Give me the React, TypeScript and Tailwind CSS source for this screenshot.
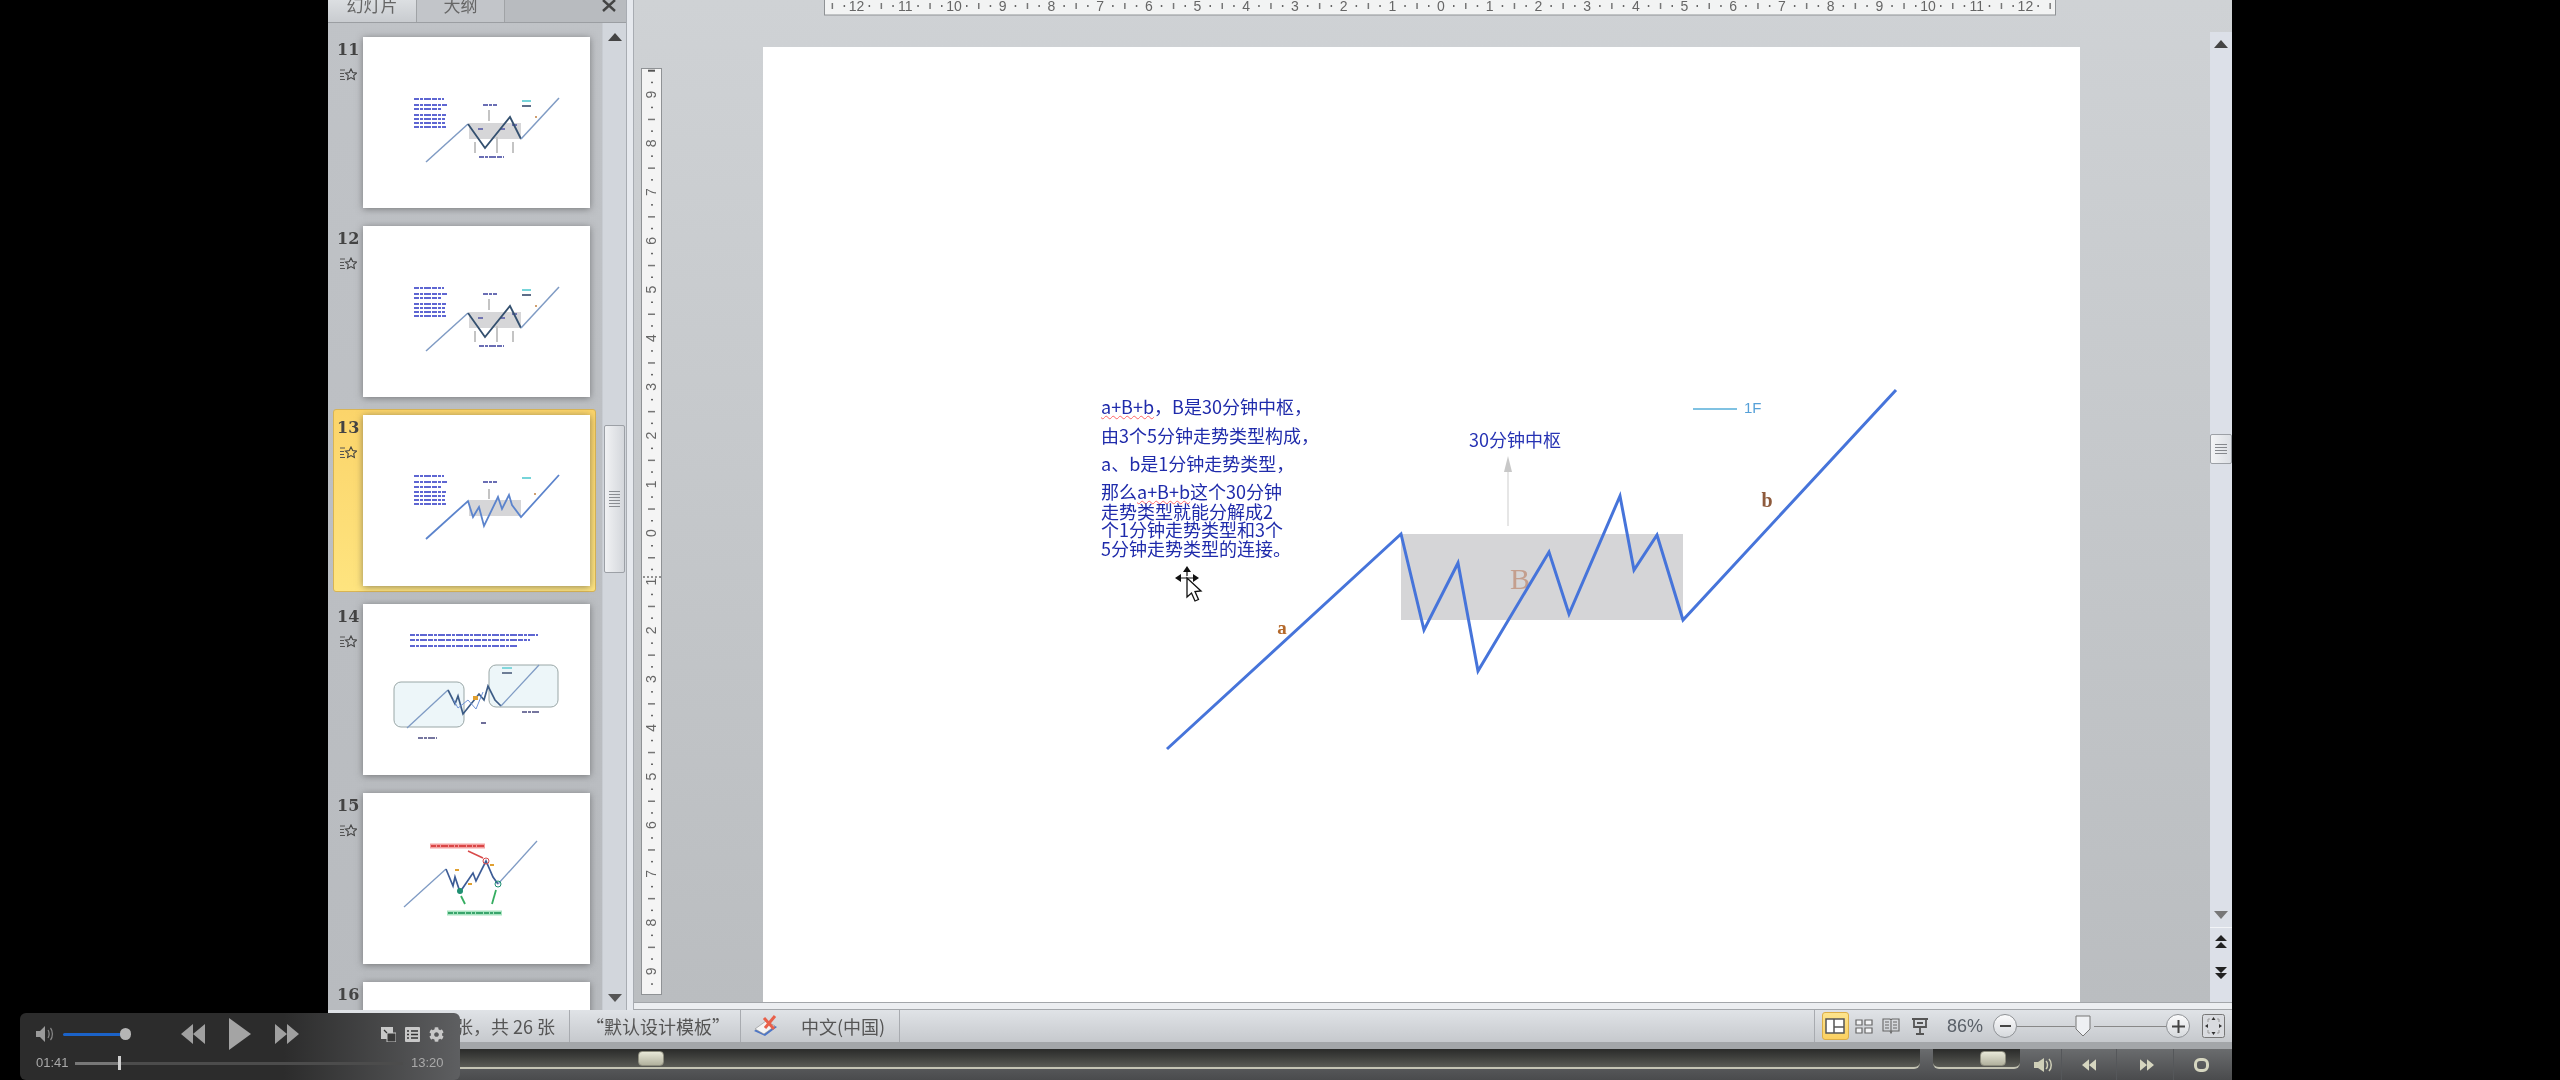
import { FaCog } from "react-icons/fa";

const BLUE = "#2733b4";

function Bars({ lines, color = "#2a35c4", h = 1.6 }: { lines: number[][]; color?: string; h?: number }) {
  return (
    <g stroke={color} strokeWidth={h} strokeDasharray="5 1 3 1 7 1">
      {lines.map(([x, y, w]) => (
        <line key={`${x}-${y}`} x1={x} y1={y} x2={x + w} y2={y} />
      ))}
    </g>
  );
}

function Down({ x, y1, y2 }: { x: number; y1: number; y2: number }) {
  return <line x1={x} y1={y1} x2={x} y2={y2} stroke="#c4c4c4" strokeWidth={2} />;
}

function Thumb11() {
  return (
    <>
      <rect x={106} y={86} width={52} height={16} fill="#d6d6d8" />
      <Bars lines={[[51, 62, 30], [51, 68, 33], [51, 72, 28], [51, 78, 32], [51, 82, 31], [51, 86, 31], [51, 90, 32]]} h={1.3} />
      <Bars lines={[[120, 68, 14], [116, 120, 25], [115, 92, 6], [137, 92, 6], [149, 88, 6]]} color="#3a3f9c" h={1.3} />
      <polyline points="63,125 105,87" fill="none" stroke="#7f9bc4" strokeWidth={1.5} />
      <polyline points="105,87 122,111 147,80 158,102" fill="none" stroke="#34506f" strokeWidth={1.8} />
      <polyline points="158,102 196,61" fill="none" stroke="#7f9bc4" strokeWidth={1.5} />
      <line x1={159} y1={64} x2={168} y2={64} stroke="#49c6cc" strokeWidth={1.5} />
      <line x1={159} y1={69} x2={168} y2={69} stroke="#283c60" strokeWidth={1.5} />
      <Down x={112} y1={105} y2={116} />
      <Down x={134} y1={100} y2={116} />
      <Down x={150} y1={105} y2={116} />
      <Down x={126} y1={73} y2={84} />
      <circle cx={173} cy={80} r={1} fill="#c08040" />
    </>
  );
}

function Thumb13() {
  return (
    <>
      <rect x={106} y={85} width={52} height={16} fill="#d6d6d8" />
      <Bars lines={[[51, 61, 30], [51, 67, 33], [51, 72, 28], [51, 77, 32], [51, 81, 31], [51, 85, 31], [51, 89, 32]]} h={1.3} />
      <Bars lines={[[120, 67, 14]]} color="#3a3f9c" h={1.3} />
      <polyline
        points="63,124 105,86 110,102 116,92 121,111 135,82 139,94 146,80 149,90 158,102 196,60"
        fill="none"
        stroke="#5c84cc"
        strokeWidth={1.8}
      />
      <line x1={159} y1={63} x2={168} y2={63} stroke="#49c6cc" strokeWidth={1.5} />
      <Down x={126} y1={74} y2={84} />
      <circle cx={172} cy={79} r={1} fill="#c08040" />
    </>
  );
}

function Thumb14() {
  return (
    <>
      <Bars lines={[[47, 31, 128], [47, 36, 120], [47, 42, 108]]} h={1.7} />
      <rect x={31} y={78} width={70} height={45} rx={7} fill="#edf6f9" stroke="#9aa7a7" strokeWidth={1} />
      <rect x={126} y={61} width={69} height={42} rx={7} fill="#edf6f9" stroke="#9aa7a7" strokeWidth={1} />
      <polyline points="44,124 85,86" fill="none" stroke="#7f9bc4" strokeWidth={1.3} />
      <polyline points="85,86 92,100 95,92 100,110 116,90 121,96 125,82 132,96 138,102" fill="none" stroke="#3d5c86" strokeWidth={1.7} />
      <polyline points="90,95 95,104 105,96 113,105 120,88" fill="none" stroke="#6f93d8" strokeWidth={1} />
      <polyline points="138,102 176,61" fill="none" stroke="#7f9bc4" strokeWidth={1.3} />
      <line x1={139} y1={64} x2={149} y2={64} stroke="#49c6cc" strokeWidth={1.3} />
      <line x1={139} y1={69} x2={149} y2={69} stroke="#283c60" strokeWidth={1.3} />
      <rect x={110} y={92} width={5} height={4} fill="#e0a030" />
      <Bars lines={[[55, 134, 19], [118, 119, 5], [159, 108, 17]]} color="#4a4a80" />
    </>
  );
}

function Thumb15() {
  return (
    <>
      <line x1={67} y1={53} x2={122} y2={53} stroke="#f4a0a0" strokeWidth={5} />
      <Bars lines={[[68, 53, 54]]} color="#d02a2a" />
      <line x1={84} y1={120} x2={139} y2={120} stroke="#a8e4c0" strokeWidth={5} />
      <Bars lines={[[85, 120, 54]]} color="#149050" />
      <polyline points="41,114 83,76" fill="none" stroke="#7f9bc4" strokeWidth={1.3} />
      <polyline points="83,76 90,93 92,84 97,99 110,80 113,88 123,68 130,84 135,91" fill="none" stroke="#3d5c96" strokeWidth={1.7} />
      <polyline points="135,91 174,48" fill="none" stroke="#7f9bc4" strokeWidth={1.3} />
      <circle cx={123} cy={68} r={3} fill="none" stroke="#d84a4a" strokeWidth={1} />
      <line x1={120} y1={65} x2={105} y2={58} stroke="#d84a4a" strokeWidth={1.5} />
      <circle cx={97} cy={98} r={3} fill="#1f8f72" />
      <circle cx={135} cy={91} r={3} fill="none" stroke="#1f8f72" strokeWidth={1} />
      <line x1={98} y1={103} x2={102} y2={111} stroke="#35ad60" strokeWidth={1.8} />
      <line x1={133} y1={97} x2={129} y2={111} stroke="#35ad60" strokeWidth={1.8} />
      <rect x={92} y={76} width={4} height={2} fill="#e0a030" />
      <rect x={127} y={71} width={4} height={2} fill="#e0a030" />
      <rect x={105} y={90} width={4} height={2} fill="#e0a030" />
    </>
  );
}

function StarMark() {
  return (
    <svg width="17" height="13" viewBox="0 0 17 13" className="mt-[7px] ml-[3px]">
      <path d="M0 2h5M0 5.500h4M0 8.500h4M0 11.500h5" stroke="#555" strokeWidth="1" />
      <path d="M11 1l1.700 3.600 3.800.5-2.800 2.600.7 3.800-3.400-1.900-3.400 1.900.7-3.800-2.800-2.600 3.800-.5z" fill="none" stroke="#444" strokeWidth="1.100" />
    </svg>
  );
}

const slides = [
  { n: 11, art: <Thumb11 /> },
  { n: 12, art: <Thumb11 /> },
  { n: 13, art: <Thumb13 />, active: true },
  { n: 14, art: <Thumb14 /> },
  { n: 15, art: <Thumb15 /> },
  { n: 16, art: null },
];

function SlidePanel() {
  return (
    <div className="flex w-[298px] shrink-0 flex-col bg-gradient-to-b from-[#c0c3c7] to-[#b8bbbf]">
      <div className="flex h-[23px] shrink-0 items-start overflow-hidden border-b border-[#9b9ea2] bg-[#b8bbbf] text-[17px] leading-[10px] text-[#666] font-['Noto_Sans_CJK_SC',sans-serif]">
        <div className="flex h-[23px] w-[88px] justify-center bg-gradient-to-b from-[#dcdfe2] to-[#c8cbcf]">幻灯片</div>
        <div className="flex h-[23px] w-[89px] justify-center border-x border-[#a0a3a6] bg-[#c2c5c9]">大纲</div>
        <svg width="14" height="12" viewBox="0 0 14 12" className="ml-[97px]">
          <path d="M1 0l12 11M13 0L1 11" stroke="#444" strokeWidth="2.400" />
        </svg>
      </div>
      <div className="flex min-h-0 flex-1">
        <div className="flex min-w-0 flex-1 flex-col gap-[6px] overflow-hidden pt-[8px] pl-[5px]">
          {slides.map((s) => (
            <div
              key={s.n}
              className={
                s.active
                  ? "flex h-[183px] w-[263px] shrink-0 rounded-[3px] border border-[#d8b455] bg-gradient-to-b from-[#fbd46a] to-[#fee47f] py-[5px]"
                  : "flex h-[183px] w-[263px] shrink-0 border border-transparent py-[5px]"
              }
            >
              <div className="w-[29px] shrink-0 pt-[2px] pl-[3px]">
                <div className="text-[16px] leading-[22px] font-bold text-[#444] font-['DejaVu_Serif',serif]">{s.n}</div>
                {s.n !== 16 && <StarMark />}
              </div>
              <div className="h-[171px] w-[227px] bg-white shadow-[0_1px_7px_rgba(60,60,60,0.55)]">
                <svg viewBox="0 0 227 171" className="h-full w-full">
                  {s.art}
                </svg>
              </div>
            </div>
          ))}
        </div>
        <div className="flex w-[24px] shrink-0 flex-col items-center border-l border-[#c8ccd2] bg-[#d2d6dc]">
          <svg width="14" height="8" viewBox="0 0 14 8" className="mt-[10px]">
            <path d="M7 0l7 8H0z" fill="#444" />
          </svg>
          <div className="mt-[384px] flex h-[148px] w-[21px] flex-col items-center justify-center gap-[2px] rounded-[2px] border border-[#9ca0a6] bg-gradient-to-r from-[#f1f2f4] to-[#d4d7dc]">
            {[0, 1, 2, 3, 4, 5].map((i) => (
              <div key={i} className="h-px w-[11px] bg-[#8a8d92]" />
            ))}
          </div>
          <svg width="14" height="8" viewBox="0 0 14 8" className="mt-[421px]">
            <path d="M7 8l7-8H0z" fill="#555" />
          </svg>
        </div>
      </div>
    </div>
  );
}

function TopRuler() {
  const marks = Array.from({ length: 25 }, (_, i) => i - 12);
  return (
    <svg width="1232" height="16" viewBox="0 0 1232 16" className="ml-[190px] block shrink-0">
      <rect x="0.500" y="-2" width="1231" height="17" fill="#f2f3f3" stroke="#8f9295" />
      {marks.map((m) => {
        const x = 617 + m * 48.7;
        return (
          <g key={m}>
            <text x={x} y={11} textAnchor="middle" fontSize="14" fill="#666" className="font-['Liberation_Sans',sans-serif]">
              {Math.abs(m)}
            </text>
            <rect x={x - 13} y={5} width={1.500} height={2} fill="#666" />
            <rect x={x + 12} y={5} width={1.500} height={2} fill="#666" />
            <rect x={x + 24} y={3} width={1.500} height={6} fill="#777" />
            {m === -12 && <rect x={x - 25} y={3} width={1.500} height={6} fill="#777" />}
          </g>
        );
      })}
    </svg>
  );
}

function LeftRuler() {
  const marks = Array.from({ length: 19 }, (_, i) => i - 9);
  return (
    <svg width="21" height="927" viewBox="0 0 21 927" className="mt-[52px] ml-[7px] block shrink-0">
      <rect x="0.500" y="0.500" width="20" height="926" fill="#f4f4f4" stroke="#8f9295" />
      {marks.map((m) => {
        const y = 465 + m * 48.7;
        return (
          <g key={m}>
            <text
              x={0}
              y={0}
              transform={`translate(15 ${y}) rotate(-90)`}
              textAnchor="middle"
              fontSize="14"
              fill="#666"
              className="font-['Liberation_Sans',sans-serif]"
            >
              {Math.abs(m)}
            </text>
            <rect x={10} y={y - 13} width={2} height={1.500} fill="#666" />
            <rect x={10} y={y + 12} width={2} height={1.500} fill="#666" />
            <rect x={7} y={y + 24} width={7} height={1.500} fill="#777" />
            {m === -9 && <rect x={7} y={y - 25} width={7} height={2} fill="#555" />}
          </g>
        );
      })}
      <line x1={2} y1={509} x2={20} y2={509} stroke="#333" strokeDasharray="2 2" />
    </svg>
  );
}

function Slide() {
  return (
    <div className="relative ml-[101px] h-[955px] w-[1317px] shrink-0 overflow-hidden bg-white">
      <svg viewBox="763 47 1317 955" className="absolute inset-0 h-full w-full">
        <rect x={1401} y={534} width={282} height={86} fill="#d5d5d7" />
        <line x1={1508} y1={526} x2={1508} y2={470} stroke="#dedede" strokeWidth={1.500} />
        <path d="M1508 456l-4 16h8z" fill="#c8c8c8" />
        <text x={1520} y={589} textAnchor="middle" fontSize="30" fill="#c49f8e" className="font-['Liberation_Serif',serif]">
          B
        </text>
        <text x={1282} y={634} textAnchor="middle" fontSize="19" fontWeight="700" fill="#b4682a" className="font-['Liberation_Serif',serif]">
          a
        </text>
        <text x={1767} y={507} textAnchor="middle" fontSize="20" fontWeight="700" fill="#8e5a3c" className="font-['Liberation_Serif',serif]">
          b
        </text>
        <polyline
          points="1167,749 1401,534 1424,630 1458,563 1478,671 1549,552 1569,614 1620,496 1634,570 1657,535 1683,620 1896,390"
          fill="none"
          stroke="#4674da"
          strokeWidth={3}
          strokeLinejoin="miter"
        />
        <text x={1515} y={447} textAnchor="middle" fontSize="18" fill={BLUE} className="font-['Noto_Sans_CJK_SC',sans-serif]">
          30分钟中枢
        </text>
        <line x1={1693} y1={409} x2={1737} y2={409} stroke="#56aed8" strokeWidth={1.500} />
        <text x={1744} y={413} fontSize="15" fill="#56a0d8" className="font-['Liberation_Sans',sans-serif]">
          1F
        </text>
        <g>
          <path d="M1187 566l-4 6h8zM1175 578l6-4v8zM1199 578l-6-4v8z" fill="#111" />
          <path d="M1187 572v4M1181 578h12" stroke="#111" strokeWidth={1.200} />
          <path d="M1187 578v19l4.500-4 3.500 8 3.500-1.500-3.500-8 6-.5z" fill="#fff" stroke="#111" strokeWidth={1.300} />
        </g>
      </svg>
      <div className="absolute top-[345px] left-[338px] text-[18px] whitespace-nowrap text-[#1f2bab] font-['Noto_Sans_CJK_SC',sans-serif]">
        <div className="h-[29px] leading-[28px]">
          <span className="underline decoration-red-400 decoration-wavy decoration-1">a+B+b</span>，B是30分钟中枢，
        </div>
        <div className="h-[28px] leading-[28px]">由3个5分钟走势类型构成，</div>
        <div className="h-[33px] leading-[28px]">a、b是1分钟走势类型，</div>
        <div className="h-[20px] leading-[19px]">
          那么<span className="underline decoration-red-400 decoration-wavy decoration-1">a+B+b</span>这个30分钟
        </div>
        <div className="h-[18px] leading-[18px]">走势类型就能分解成2</div>
        <div className="h-[19px] leading-[19px]">个1分钟走势类型和3个</div>
        <div className="h-[19px] leading-[19px]">5分钟走势类型的连接。</div>
      </div>
    </div>
  );
}

function RightScroll() {
  return (
    <div className="mt-[32px] flex w-[22px] shrink-0 flex-col items-center bg-[#dce0e8]">
      <svg width="14" height="8" viewBox="0 0 14 8" className="mt-[8px]">
        <path d="M7 0l7 8H0z" fill="#444" />
      </svg>
      <div className="mt-[386px] flex h-[30px] w-[22px] flex-col items-center justify-center gap-[2px] rounded-[2px] border border-[#9ca0a6] bg-gradient-to-r from-[#f3f4f6] to-[#dcdfe4]">
        {[0, 1, 2, 3].map((i) => (
          <div key={i} className="h-px w-[12px] bg-[#85888d]" />
        ))}
      </div>
      <svg width="14" height="8" viewBox="0 0 14 8" className="mt-[447px]">
        <path d="M7 8l7-8H0z" fill="#777" />
      </svg>
      <div className="mt-[8px] h-px w-full bg-[#f2f4f7]" />
      <svg width="14" height="44" viewBox="0 0 14 44" className="mt-[7px]">
        <path d="M7 0l6 6H1zM7 7l6 6H1z" fill="#222" />
        <path d="M7 38l6-6H1zM7 44l6-6H1z" fill="#222" />
      </svg>
    </div>
  );
}

function Canvas() {
  return (
    <div className="flex min-w-0 flex-1 flex-col">
      <div className="flex min-h-0 flex-1 bg-gradient-to-b from-[#cfd2d5] to-[#babdc0]">
        <div className="flex min-w-0 flex-1 flex-col overflow-hidden">
          <TopRuler />
          <div className="flex min-h-0 flex-1 items-start">
            <div className="flex items-start">
              <LeftRuler />
            </div>
            <div className="mt-[31px]">
              <Slide />
            </div>
          </div>
        </div>
        <RightScroll />
      </div>
      <div className="h-[8px] shrink-0 border-y border-[#a3a6aa] bg-[#eceef1]" />
    </div>
  );
}

function ViewIcons() {
  return (
    <div className="flex items-center">
      <div className="flex h-[28px] w-[27px] items-center justify-center rounded-[3px] border border-[#dcae48] bg-gradient-to-b from-[#fde48c] to-[#fbd060]">
        <svg width="20" height="16" viewBox="0 0 20 16">
          <rect x="1" y="1" width="18" height="14" fill="#fff" stroke="#555" strokeWidth="1.500" />
          <path d="M9 1v14M9 9h10" stroke="#555" strokeWidth="1.500" />
        </svg>
      </div>
      <svg width="18" height="15" viewBox="0 0 18 15" className="ml-[6px]">
        <path d="M1 1h6v5H1zM10 1h7v5h-7zM1 9h6v5H1zM10 9h7v5h-7z" fill="#f3f4f6" stroke="#666" strokeWidth="1.200" />
      </svg>
      <svg width="18" height="17" viewBox="0 0 18 17" className="ml-[9px]">
        <path d="M1 1h7l1 1 1-1h7v12h-7l-1 2-1-2H1zM9 2v11M3 4h4M3 7h4M3 10h4M11 4h4M11 7h4M11 10h4" fill="none" stroke="#666" strokeWidth="1.100" />
      </svg>
      <svg width="16" height="17" viewBox="0 0 16 17" className="ml-[12px]">
        <path d="M0 1h16M2 1v8h12V1M8 9v6M4 16h8M5 5h6" fill="none" stroke="#555" strokeWidth="1.800" />
      </svg>
    </div>
  );
}

function ZoomControl() {
  return (
    <div className="ml-[10px] flex items-center">
      <div className="flex h-[24px] w-[24px] shrink-0 items-center justify-center rounded-full border border-[#8f9296] bg-gradient-to-b from-[#fbfbfc] to-[#d6d9dd]">
        <div className="h-[2px] w-[11px] bg-[#444]" />
      </div>
      <div className="flex h-[24px] w-[149px] items-center">
        <div className="h-px w-[58px] bg-[#888]" />
        <svg width="16" height="22" viewBox="0 0 16 22">
          <path d="M1 1h14v13l-7 7-7-7z" fill="#eef0f3" stroke="#777" strokeWidth="1" />
        </svg>
        <div className="ml-[3px] h-px flex-1 bg-[#888]" />
      </div>
      <div className="flex h-[24px] w-[24px] shrink-0 items-center justify-center rounded-full border border-[#8f9296] bg-gradient-to-b from-[#fbfbfc] to-[#d6d9dd]">
        <svg width="13" height="13" viewBox="0 0 13 13">
          <path d="M6.500 0v13M0 6.500h13" stroke="#444" strokeWidth="2" />
        </svg>
      </div>
      <svg width="23" height="24" viewBox="0 0 23 24" className="ml-[12px]">
        <rect x="0.500" y="0.500" width="22" height="23" rx="2" fill="#d9dbdf" stroke="#777" />
        <path d="M11.500 3l-2 3h4zM11.500 21l-2-3h4zM3 12l3-2v4zM20 12l-3-2v4z" fill="#333" />
        <path d="M6 8v-3h2M15 5h2v3M6 16v3h2M15 19h2v-3" fill="none" stroke="#999" />
      </svg>
    </div>
  );
}

function StatusBar() {
  return (
    <div className="flex h-[39px] shrink-0 border-b-[7px] border-b-[#a3a6a9] bg-gradient-to-b from-[#e0e3e7] to-[#c6c9cd] text-[18px] text-[#555] font-['Noto_Sans_CJK_SC',sans-serif]">
      <div className="flex h-full w-[242px] items-center justify-end overflow-hidden border-r border-[#a8abb0] pr-[14px] whitespace-nowrap">
        幻灯片 第 13 张，共 26 张
      </div>
      <div className="flex h-full w-[171px] items-center border-r border-[#a8abb0] pl-[16px] whitespace-nowrap">
        &ldquo;默认设计模板&rdquo;
      </div>
      <div className="flex h-full w-[159px] items-center border-r border-[#a8abb0] pl-[12px] whitespace-nowrap">
        <svg width="26" height="26" viewBox="0 0 26 26">
          <path d="M1 18l13-9 10 5-12 9z" fill="#4c76c8" />
          <path d="M2 16l11-8 9 5-11 8z" fill="#f4f4f4" stroke="#8a8a8a" strokeWidth="0.600" />
          <path d="M11 5l10 11M22 3L12 15" stroke="#e8604a" strokeWidth="3" />
        </svg>
        <span className="ml-[22px]">中文(中国)</span>
      </div>
      <div className="flex-1" />
      <div className="flex h-full items-center border-l border-[#a8abb0] pl-[7px]">
        <ViewIcons />
        <span className="ml-[19px] text-[18px] text-[#5a6068] font-['Liberation_Sans',sans-serif]">86%</span>
        <ZoomControl />
        <div className="w-[7px]" />
      </div>
    </div>
  );
}

function Knob({ ml }: { ml: number }) {
  return (
    <div
      style={{ marginLeft: ml }}
      className="h-[15px] w-[26px] rounded-[4px] border border-[#8d8d7e] bg-gradient-to-b from-[#e8e8d8] to-[#b2b29e]"
    />
  );
}

function DarkBar() {
  return (
    <div className="flex h-[31px] shrink-0 bg-gradient-to-b from-[#6a6c6e] to-[#4a4b4d]">
      <div className="flex h-[20px] w-[1592px] shrink-0 items-center rounded-br-[6px] border-b-2 border-b-[#c4c4b4] bg-gradient-to-b from-[#2a2b2a] to-[#5a5b55]">
        <Knob ml={310} />
      </div>
      <div className="ml-[13px] flex h-[20px] w-[87px] shrink-0 items-center rounded-b-[6px] border-b-2 border-b-[#c4c4b4] bg-gradient-to-b from-[#2a2b2a] to-[#5a5b55]">
        <Knob ml={47} />
      </div>
      <div className="flex w-[42px] items-center justify-center border-r border-[#55575a] pl-[4px]">
        <svg width="18" height="14" viewBox="0 0 18 14">
          <path d="M0 4h4l6-4v14l-6-4H0z" fill="#cfcfb8" />
          <path d="M12 3c2 2 2 6 0 8M15 1c3 3 3 9 0 12" fill="none" stroke="#cfcfb8" strokeWidth="1.500" />
        </svg>
      </div>
      <div className="flex w-[55px] items-center justify-center border-r border-[#55575a]">
        <svg width="14" height="12" viewBox="0 0 12 10">
          <path d="M6 0v10L0 5zM12 0v10L6 5z" fill="#d6d6c0" />
        </svg>
      </div>
      <div className="flex w-[57px] items-center justify-center border-r border-[#55575a] pl-[4px]">
        <svg width="14" height="12" viewBox="0 0 12 10">
          <path d="M0 0v10l6-5zM6 0v10l6-5z" fill="#d6d6c0" />
        </svg>
      </div>
      <div className="flex flex-1 items-center justify-center pr-[3px]">
        <div className="h-[14px] w-[15px] rounded-[6px] border-[3px] border-[#d6d6c0]" />
      </div>
    </div>
  );
}

function Player() {
  return (
    <div className="absolute bottom-0 left-[20px] flex h-[67px] w-[440px] flex-col rounded-[6px] bg-gradient-to-r from-[#2c2c2c] from-60% to-[#5e5f61] px-[16px] text-[13px] text-[#a9a9a9] font-['Liberation_Sans',sans-serif]">
      <div className="flex h-[42px] items-center">
        <svg width="17" height="16" viewBox="0 0 17 16" className="shrink-0">
          <path d="M0 5h4l5-5v16l-5-5H0z" fill="#9a9a9a" />
          <path d="M12 4c1.500 2 1.500 6 0 8M14.500 2c2.500 3 2.500 9 0 12" fill="none" stroke="#8a8a8a" strokeWidth="1.200" />
        </svg>
        <div className="ml-[10px] h-[3px] w-[58px] rounded-l-full bg-[#1b63c9]" />
        <div className="h-[12px] w-[11px] -translate-x-[1px] rounded-full bg-[#b5b5b5]" />
        <svg width="24" height="20" viewBox="0 0 24 20" className="ml-[49px] shrink-0">
          <path d="M12 0v20L0 10zM24 0v20L12 10z" fill="#a0a0a0" />
        </svg>
        <svg width="22" height="32" viewBox="0 0 22 32" className="ml-[24px] shrink-0">
          <path d="M0 0l22 16L0 32z" fill="#a4a4a4" />
        </svg>
        <svg width="24" height="20" viewBox="0 0 24 20" className="ml-[24px] shrink-0">
          <path d="M0 0v20l12-10zM12 0v20l12-10z" fill="#a0a0a0" />
        </svg>
        <svg width="15" height="15" viewBox="0 0 15 15" className="ml-[82px] shrink-0">
          <rect x="0" y="0" width="12" height="12" fill="#c8c8c8" />
          <rect x="6" y="6" width="9" height="9" fill="#3a3a3a" stroke="#c8c8c8" />
          <path d="M3 3l3 3" stroke="#333" strokeWidth="1.200" />
        </svg>
        <svg width="15" height="15" viewBox="0 0 15 15" className="ml-[9px] shrink-0">
          <rect x="0" y="0" width="15" height="15" rx="1" fill="#c8c8c8" />
          <path d="M2 4h2M2 7.500h2M2 11h2M6 4h7M6 7.500h7M6 11h7" stroke="#333" strokeWidth="1.300" />
        </svg>
        <FaCog className="ml-[9px] h-[15px] w-[15px] shrink-0 text-[#c8c8c8]" />
      </div>
      <div className="flex h-[16px] items-center">
        <span className="w-[34px] shrink-0">01:41</span>
        <div className="ml-[5px] flex h-[3px] w-[328px] items-center bg-[#4c4c4c]">
          <div className="h-[3px] w-[43px] bg-[#787878]" />
          <div className="h-[14px] w-[3px] bg-[#d0d0d0]" />
        </div>
        <span className="ml-[8px]">13:20</span>
      </div>
    </div>
  );
}

export default function App() {
  return (
    <div className="relative flex h-[1080px] w-[2560px] overflow-hidden bg-black blur-[0.5px]">
      <div className="w-[328px] shrink-0" />
      <div className="flex w-[1904px] shrink-0 flex-col">
        <div className="flex h-[1010px] shrink-0">
          <SlidePanel />
          <div className="w-[8px] shrink-0 border-x border-[#a8acb2] bg-[#e6e9ee]" />
          <Canvas />
        </div>
        <StatusBar />
        <DarkBar />
      </div>
      <Player />
    </div>
  );
}
